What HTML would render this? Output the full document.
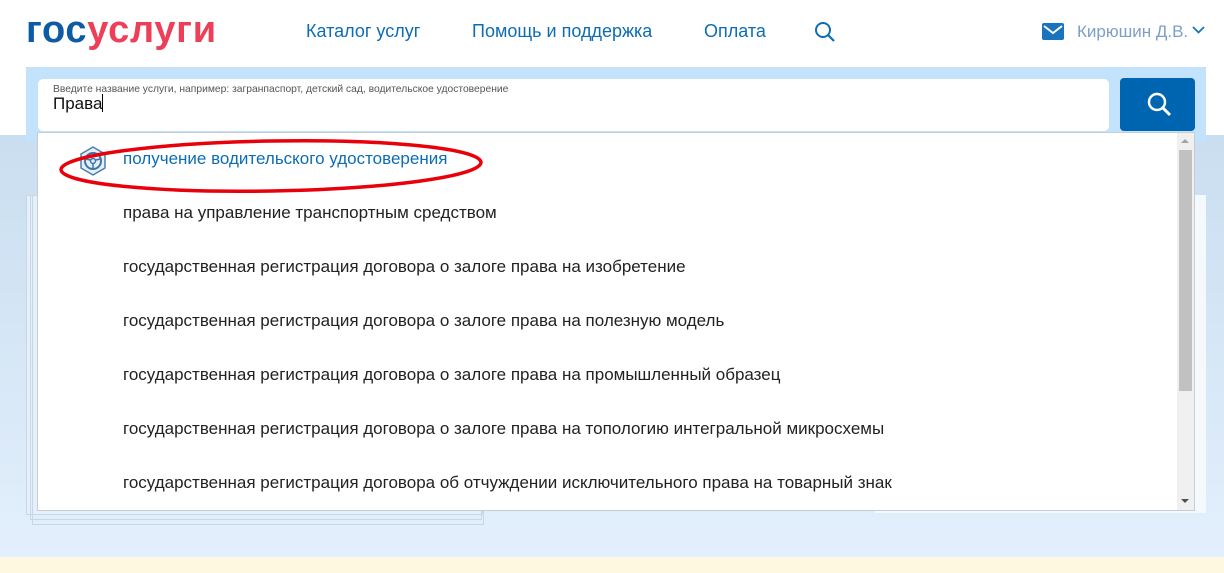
<!DOCTYPE html>
<html><head><meta charset="utf-8"><style>
*{margin:0;padding:0;box-sizing:border-box}
body{width:1224px;height:573px;overflow:hidden;position:relative;font-family:"Liberation Sans",sans-serif;background:#fff}
.abs{position:absolute}
.nav{color:#0c6db5;font-size:18px;top:21px}
.row{position:absolute;left:123px;font-size:17px;color:#222}
</style></head><body>
<div class="abs" style="left:0;top:135px;width:1224px;height:422px;background:linear-gradient(#c9def0,#e3effc)"></div>
<div class="abs" style="left:0;top:557px;width:1224px;height:16px;background:#fff8e0"></div>
<div class="abs" style="left:26px;top:195px;width:457px;height:320px;border:1px solid #c8d6e6;background:#e6f0fb"></div>
<div class="abs" style="left:30px;top:195px;width:452px;height:325px;border:1px solid #c8d6e6"></div>
<div class="abs" style="left:32px;top:195px;width:452px;height:330px;border:1px solid #c8d6e6"></div>
<div class="abs" style="left:875px;top:195px;width:331px;height:318px;background:#f4f9fe"></div>
<div class="abs" style="left:26px;top:67px;width:1180px;height:75px;background:#c2e3fb"></div>
<div class="abs" style="left:26px;top:10px;font-size:38px;font-weight:bold;letter-spacing:0.7px;line-height:40px"><span style="color:#0d5aa5">гос</span><span style="color:#ee3f58">услуги</span></div>
<div class="abs nav" style="left:306px">Каталог услуг</div>
<div class="abs nav" style="left:472px">Помощь и поддержка</div>
<div class="abs nav" style="left:704px">Оплата</div>
<svg class="abs" style="left:814px;top:21px" width="22" height="22" viewBox="0 0 22 22"><circle cx="9" cy="9" r="7" fill="none" stroke="#0c6db5" stroke-width="2"/><line x1="14" y1="14" x2="20" y2="20" stroke="#0c6db5" stroke-width="2.2"/></svg>
<svg class="abs" style="left:1042px;top:23px" width="22" height="17" viewBox="0 0 22 17"><rect width="22" height="17" rx="2" fill="#1a73bd"/><polyline points="2,3 11,10 20,3" fill="none" stroke="#fff" stroke-width="2"/></svg>
<div class="abs" style="left:1077px;top:22px;font-size:17px;color:#7d9fc6">Кирюшин Д.В.</div>
<svg class="abs" style="left:1192px;top:26px" width="13" height="9" viewBox="0 0 13 9"><polyline points="1,1 6.5,6.5 12,1" fill="none" stroke="#1a73bd" stroke-width="1.8"/></svg>
<div class="abs" style="left:38px;top:79px;width:1071px;height:52px;background:#fff;border-radius:5px"></div>
<div class="abs" style="left:53px;top:84px;font-size:10.3px;color:#555">Введите название услуги, например: загранпаспорт, детский сад, водительское удостоверение</div>
<div class="abs" style="left:53px;top:94px;font-size:17px;color:#111">Права<span style="display:inline-block;width:1px;height:18px;background:#000;vertical-align:-3px"></span></div>
<div class="abs" style="left:1120px;top:78px;width:75px;height:53px;background:#0065b1;border-radius:4px"></div>
<svg class="abs" style="left:1146px;top:91px" width="28" height="28" viewBox="0 0 28 28"><circle cx="11" cy="11" r="8" fill="none" stroke="#fff" stroke-width="2.5"/><line x1="17" y1="17" x2="24" y2="24" stroke="#fff" stroke-width="3"/></svg>
<div class="abs" style="left:37px;top:132px;width:1158px;height:379px;background:#fff;border:1px solid #c8ccd4"></div>
<div class="abs" style="left:1177px;top:133px;width:17px;height:377px;background:#f0f0f0"></div>
<div class="abs" style="left:1179px;top:150px;width:13px;height:241px;background:#c1c1c1"></div>
<div class="abs" style="left:1181px;top:139px;border:4px solid transparent;border-bottom:4px solid #a3a3a3;border-top:0"></div>
<div class="abs" style="left:1181px;top:499px;border:4px solid transparent;border-top:4px solid #505050;border-bottom:0"></div>
<svg class="abs" style="left:78px;top:145px" width="30" height="32" viewBox="0 0 30 32"><polygon points="15,2 27,9 27,23 15,30 3,23 3,9" fill="#e6eef6" stroke="#4a7fae" stroke-width="1.5" stroke-linejoin="round"/><circle cx="15" cy="16" r="8" fill="none" stroke="#3c76aa" stroke-width="2"/><circle cx="15" cy="16" r="2.5" fill="none" stroke="#3c76aa" stroke-width="1.5"/><path d="M7.5 14 L12.5 15 M17.5 15 L22.5 14 M15 18.5 V23.5" stroke="#3c76aa" stroke-width="1.5"/></svg>
<div class="row" style="top:149px;color:#0c6db5">получение водительского удостоверения</div>
<div class="row" style="top:203px">права на управление транспортным средством</div>
<div class="row" style="top:257px">государственная регистрация договора о залоге права на изобретение</div>
<div class="row" style="top:311px">государственная регистрация договора о залоге права на полезную модель</div>
<div class="row" style="top:365px">государственная регистрация договора о залоге права на промышленный образец</div>
<div class="row" style="top:419px">государственная регистрация договора о залоге права на топологию интегральной микросхемы</div>
<div class="row" style="top:473px">государственная регистрация договора об отчуждении исключительного права на товарный знак</div>
<svg class="abs" style="left:50px;top:128px" width="440" height="66" viewBox="0 0 440 66"><ellipse cx="221" cy="38" rx="210" ry="25" fill="none" stroke="#e8000b" stroke-width="3.5" transform="rotate(-1 221 38)"/></svg>
</body></html>
